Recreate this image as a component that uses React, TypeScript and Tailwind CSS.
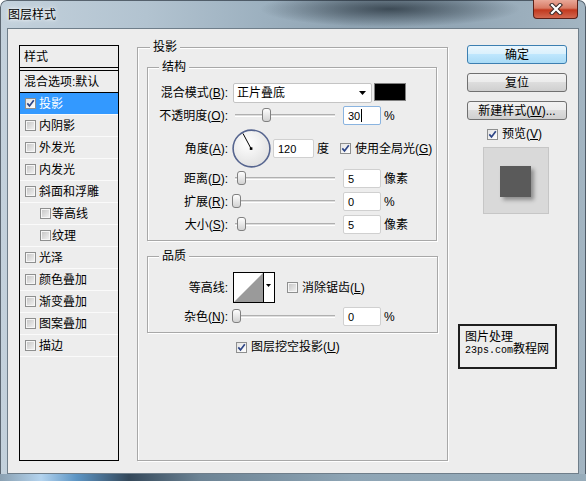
import React from "react";

const CB = ({ checked = false }: { checked?: boolean }) =>
  checked ? (
    <span className="w-[11px] h-[11px] shrink-0 border border-[#8e8f8f] bg-[linear-gradient(135deg,#e4e4e4,#ffffff)] flex items-center justify-center">
      <svg width="9" height="9" viewBox="0 0 9 9">
        <path d="M1.3 4.4 L3.5 6.9 L7.8 1.3" fill="none" stroke="#2d4586" strokeWidth="1.7" />
      </svg>
    </span>
  ) : (
    <span className="w-[11px] h-[11px] shrink-0 border border-[#8e8f8f] bg-[#f6f6f6] p-[1px] flex">
      <span className="flex-1 bg-[linear-gradient(135deg,#c8c8c8,#efefef)]" />
    </span>
  );

const Lbl = ({ t, k }: { t: string; k?: string }) => (
  <div className="w-[80px] shrink-0 text-right whitespace-nowrap">
    {t}
    {k ? (
      <>
        (<span className="underline underline-offset-[1px]">{k}</span>)
      </>
    ) : null}
    :
  </div>
);

const Slider = ({ thumb }: { thumb: string }) => (
  <div className="relative w-[106px] h-[19px] ml-[4px] shrink-0 flex items-center px-[3px]">
    <div className="h-[3px] w-full border-t border-[#b0b0b0] bg-[#dedede] border-b border-b-white" />
    <div
      className={`absolute top-[2px] w-[9px] h-[14px] rounded-[3px] border border-[#808080] bg-[linear-gradient(#fefefe,#d2d2d2)] ${thumb}`}
    />
  </div>
);

const Inp = ({ v, w, focus = false, caret = false }: { v: string; w: string; focus?: boolean; caret?: boolean }) => (
  <div
    className={`h-[19px] ${w} shrink-0 bg-white border ${
      focus ? "border-[#8ab4e0]" : "border-[#d0d0d0]"
    } rounded-[2px] pl-[4px] flex items-center text-[11px]`}
  >
    <span>{v}</span>
    {caret ? <span className="w-[1px] h-[13px] bg-black ml-[1px]" /> : null}
  </div>
);

const SliderRow = ({
  t,
  k,
  thumb,
  v,
  unit,
  focus = false,
  caret = false,
  mt,
}: {
  t: string;
  k: string;
  thumb: string;
  v: string;
  unit: string;
  focus?: boolean;
  caret?: boolean;
  mt: string;
}) => (
  <div className={`flex items-center h-[19px] ${mt}`}>
    <Lbl t={t} k={k} />
    <Slider thumb={thumb} />
    <div className="ml-[5px]">
      <Inp v={v} w="w-[38px]" focus={focus} caret={caret} />
    </div>
    <div className="ml-[3px]">{unit}</div>
  </div>
);

const Legend = ({ t, ml }: { t: string; ml: string }) => (
  <div className={`-mt-[8px] h-[14px] ${ml} px-[3px] bg-[#ededed] w-fit leading-[14px]`}>{t}</div>
);

const Btn = ({ children, def = false, mt = "" }: { children: React.ReactNode; def?: boolean; mt?: string }) => (
  <div
    className={`ml-[9px] w-[100px] h-[19px] rounded-[3px] border flex items-center justify-center ${mt} ${
      def
        ? "border-[#3c7fb1] bg-[linear-gradient(#eaf6fd_0%,#d9f0fc_50%,#bee6fd_50%,#a9dbf6_100%)]"
        : "border-[#707070] bg-[linear-gradient(#f2f2f2_0%,#ebebeb_50%,#dddddd_50%,#cfcfcf_100%)]"
    }`}
  >
    {children}
  </div>
);

const LeftRow = ({ t, checked = false, sel = false, sub = false }: { t: string; checked?: boolean; sel?: boolean; sub?: boolean }) => (
  <div
    className={`h-[22px] border-b border-[#fafafa] flex items-center ${sub ? "pl-[20px] gap-[1px]" : "pl-[5px] gap-[3px]"} ${
      sel ? "bg-[#3399ff] text-white" : ""
    }`}
  >
    <CB checked={checked} />
    <span>{t}</span>
  </div>
);

export default function App() {
  return (
    <div className="relative w-[586px] h-[481px] overflow-hidden rounded-t-[7px] font-['Liberation_Sans','Noto_Sans_CJK_SC',sans-serif] text-[12px] leading-[14px] text-black bg-[radial-gradient(130px_18px_at_390px_9px,rgba(40,52,62,0.8),rgba(40,52,62,0)),linear-gradient(90deg,#c3d1dc_0%,#b2c3d0_25%,#9cb0bf_45%,#8fa3b2_60%,#93a7b6_78%,#a3b5c2_100%)] shadow-[inset_0_0_0_1px_rgba(35,45,55,0.65)]">
      {/* title bar */}
      <div className="h-[28px] flex items-start">
        <div className="pl-[8px] pt-[8px] [text-shadow:0_0_6px_#fff,0_0_3px_#fff]">图层样式</div>
        <div className="ml-auto mr-[8px] w-[45px] h-[19px] rounded-b-[4px] border border-t-0 border-[#5a2018] bg-[linear-gradient(#e9a898_0%,#d87a64_45%,#c2391e_55%,#d26850_100%)] flex items-center justify-center">
          <svg width="14" height="12" viewBox="0 0 14 12">
            <path d="M3 2 L11 10 M11 2 L3 10" stroke="#3b2a28" strokeWidth="4.2" strokeLinecap="square" />
            <path d="M3 2 L11 10 M11 2 L3 10" stroke="#ffffff" strokeWidth="2.2" strokeLinecap="square" />
          </svg>
        </div>
      </div>

      {/* client */}
      <div className="mx-[7px] h-[446px] border border-[#6f7e8a] bg-[#ededed] flex items-start pt-[16px] pl-[11px]">
        {/* left panel */}
        <div className="w-[100px] h-[416px] shrink-0 border border-black flex flex-col">
          <div className="h-[21px] pl-[4px] flex items-center">样式</div>
          <div className="h-[4px] border-y border-black" />
          <div className="h-[22px] pl-[4px] flex items-center border-b border-black whitespace-nowrap">混合选项:默认</div>
          <LeftRow t="投影" checked sel />
          <LeftRow t="内阴影" />
          <LeftRow t="外发光" />
          <LeftRow t="内发光" />
          <LeftRow t="斜面和浮雕" />
          <LeftRow t="等高线" sub />
          <LeftRow t="纹理" sub />
          <LeftRow t="光泽" />
          <LeftRow t="颜色叠加" />
          <LeftRow t="渐变叠加" />
          <LeftRow t="图案叠加" />
          <LeftRow t="描边" />
        </div>

        {/* middle group */}
        <div className="ml-[18px] mt-[2px] w-[311px] h-[414px] shrink-0 border border-[#a8a8a8] shadow-[inset_1px_1px_0_#fff,1px_1px_0_#fff] flex flex-col">
          <Legend t="投影" ml="ml-[12px]" />

          {/* 结构 */}
          <div className="ml-[9px] mt-[13px] w-[290px] h-[174px] border border-[#a8a8a8] shadow-[inset_1px_1px_0_#fff,1px_1px_0_#fff] flex flex-col">
            <Legend t="结构" ml="ml-[11px]" />
            <div className="flex items-center h-[20px] mt-[9px]">
              <Lbl t="混合模式" k="B" />
              <div className="ml-[5px] w-[139px] h-[20px] bg-white border border-[#c4c4c4] rounded-[2px] pl-[3px] pr-[5px] flex items-center justify-between">
                <span>正片叠底</span>
                <svg width="7" height="4" viewBox="0 0 7 4">
                  <path d="M0 0 L7 0 L3.5 4 Z" fill="#000" />
                </svg>
              </div>
              <div className="ml-[2px] self-start w-[32px] h-[18px] bg-black border border-[#808080]" />
            </div>
            <SliderRow t="不透明度" k="O" thumb="left-[30px]" v="30" unit="%" focus caret mt="mt-[3px]" />
            <div className="flex items-center h-[39px] mt-[4px]">
              <Lbl t="角度" k="A" />
              <div className="ml-[4px] w-[39px] h-[39px] shrink-0">
                <svg width="39" height="39" viewBox="0 0 39 39">
                  <defs>
                    <radialGradient id="dialg" cx="40%" cy="35%" r="70%">
                      <stop offset="0" stopColor="#ffffff" />
                      <stop offset="1" stopColor="#e0e0e0" />
                    </radialGradient>
                  </defs>
                  <circle cx="19.5" cy="19.5" r="18.4" fill="url(#dialg)" stroke="#56658f" strokeWidth="1.6" />
                  <line x1="19" y1="19.5" x2="11" y2="4.5" stroke="#000" strokeWidth="1" />
                  <rect x="17.8" y="18.3" width="2.6" height="2.6" fill="#000" />
                </svg>
              </div>
              <div className="ml-[2px]">
                <Inp v="120" w="w-[41px]" />
              </div>
              <div className="ml-[3px]">度</div>
              <div className="ml-[11px] flex items-center gap-[4px] whitespace-nowrap">
                <CB checked />
                <span>
                  使用全局光(<span className="underline underline-offset-[1px]">G</span>)
                </span>
              </div>
            </div>
            <SliderRow t="距离" k="D" thumb="left-[5px]" v="5" unit="像素" mt="mt-[1px]" />
            <SliderRow t="扩展" k="R" thumb="left-[0px]" v="0" unit="%" mt="mt-[4px]" />
            <SliderRow t="大小" k="S" thumb="left-[5px]" v="5" unit="像素" mt="mt-[4px]" />
          </div>

          {/* 品质 */}
          <div className="ml-[9px] mt-[15px] w-[291px] h-[77px] border border-[#a8a8a8] shadow-[inset_1px_1px_0_#fff,1px_1px_0_#fff] flex flex-col">
            <Legend t="品质" ml="ml-[11px]" />
            <div className="flex items-center h-[31px] mt-[9px]">
              <Lbl t="等高线" />
              <div className="ml-[5px] w-[42px] h-[31px] shrink-0">
                <svg width="42" height="31" viewBox="0 0 42 31">
                  <rect x="0.5" y="0.5" width="41" height="30" fill="#fff" stroke="#000" />
                  <polygon points="1,30 30,1 30,30" fill="#9a9a9a" />
                  <line x1="30.5" y1="0" x2="30.5" y2="31" stroke="#000" />
                  <polygon points="33,12 38,12 35.5,15" fill="#000" />
                </svg>
              </div>
              <div className="ml-[12px] flex items-center gap-[4px] whitespace-nowrap">
                <CB />
                <span>
                  消除锯齿(<span className="underline underline-offset-[1px]">L</span>)
                </span>
              </div>
            </div>
            <SliderRow t="杂色" k="N" thumb="left-[0px]" v="0" unit="%" mt="mt-[4px]" />
          </div>

          <div className="mt-[7px] h-[14px] pl-[98px] flex items-center gap-[4px] whitespace-nowrap">
            <CB checked />
            <span>
              图层挖空投影(<span className="underline underline-offset-[1px]">U</span>)
            </span>
          </div>
        </div>

        {/* right column */}
        <div className="ml-[10px] w-[120px] shrink-0 flex flex-col">
          <Btn def>确定</Btn>
          <Btn mt="mt-[9px]">复位</Btn>
          <Btn mt="mt-[9px]">
            新建样式(<span className="underline underline-offset-[1px]">W</span>)...
          </Btn>
          <div className="mt-[7px] h-[14px] ml-[29px] flex items-center gap-[4px]">
            <CB checked />
            <span>
              预览(<span className="underline underline-offset-[1px]">V</span>)
            </span>
          </div>
          <div className="mt-[6px] ml-[25px] w-[66px] h-[67px] border border-[#c6c6c6] bg-[#d9d9d9] pl-[16px] pt-[18px]">
            <div className="w-[31px] h-[31px] bg-[#5a5a5a] shadow-[3px_3px_4px_rgba(0,0,0,0.35)]" />
          </div>
          <div className="mt-[110px] w-[99px] h-[45px] border-2 border-[#1e1e1e] pl-[5px] pt-[5px]">
            <div className="flex items-end">
              <div className="flex flex-col">
                <span className="leading-[13px]">图片处理</span>
                <span className="font-['Liberation_Mono',monospace] text-[10px] leading-[14px]">23ps.com</span>
              </div>
              <span className="mb-[1px] leading-[15px] text-[12px]">教程网</span>
            </div>
          </div>
        </div>
      </div>

      {/* bottom frame */}
      <div className="h-[7px] bg-[linear-gradient(90deg,#8aa0b1_0%,#b3d3ee_7%,#5d95c4_13%,#34485a_22%,#6c8394_34%,#8ea5b5_60%,#97acba_100%)]" />
    </div>
  );
}
